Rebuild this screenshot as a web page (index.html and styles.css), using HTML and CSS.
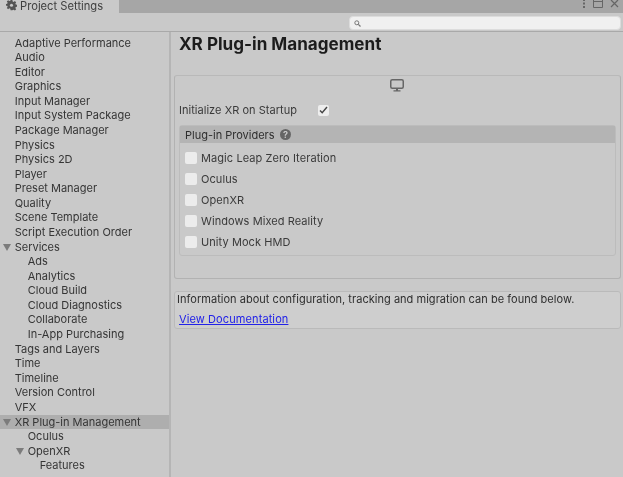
FILE: index.html
```html
<!DOCTYPE html>
<html lang="en">
<head>
<meta charset="utf-8">
<title>Project Settings</title>
<link rel="stylesheet" href="styles.css">
</head>
<body>
<div class="window">
  <header class="tabbar">
    <div class="tab">
      <svg class="gear" viewBox="0 0 12 12"><path d="M5 .5h2l.3 1.5 1.1.5 1.3-.9 1.4 1.4-.9 1.3.5 1.1 1.5.3v2l-1.5.3-.5 1.1.9 1.3-1.4 1.4-1.3-.9-1.1.5L7 11.5H5l-.3-1.5-1.1-.5-1.3.9-1.4-1.4.9-1.3-.5-1.1L0 6.800v-2l1.300-.3.5-1.100-.9-1.300L2.300 .7l1.300.9 1.100-.5z" fill="#555" transform="translate(0 -.4)"/><circle cx="6" cy="5.700" r="1.700" fill="#c8c8c8"/></svg>
      <span>Project Settings</span>
    </div>
    <div class="winctl">
      <svg width="4" height="9" viewBox="0 0 4 9"><path d="M1 0h2v2H1zM1 3.500h2v2H1zM1 7h2v2H1z" fill="#666"/></svg>
      <svg width="10" height="9" viewBox="0 0 10 9"><path d="M.5.500h9v8h-9zM.5 2.500h9" fill="none" stroke="#666"/></svg>
      <svg width="9" height="9" viewBox="0 0 9 9"><path d="M1 1l7 7M8 1L1 8" fill="none" stroke="#666" stroke-width="1.200"/></svg>
    </div>
  </header>
  <div class="toolbar">
    <div class="search">
      <svg width="7" height="7" viewBox="0 0 7 7"><circle cx="2.800" cy="2.800" r="2" fill="none" stroke="#777"/><path d="M4.300 4.300L6.500 6.500" stroke="#777" stroke-width="1.200"/></svg>
    </div>
  </div>
  <div class="main">
    <nav class="sidebar">
      <div class="item">Adaptive Performance</div>
      <div class="item">Audio</div>
      <div class="item">Editor</div>
      <div class="item">Graphics</div>
      <div class="item">Input Manager</div>
      <div class="item">Input System Package</div>
      <div class="item">Package Manager</div>
      <div class="item">Physics</div>
      <div class="item">Physics 2D</div>
      <div class="item">Player</div>
      <div class="item">Preset Manager</div>
      <div class="item">Quality</div>
      <div class="item">Scene Template</div>
      <div class="item">Script Execution Order</div>
      <div class="item open">Services</div>
      <div class="item l1">Ads</div>
      <div class="item l1">Analytics</div>
      <div class="item l1">Cloud Build</div>
      <div class="item l1">Cloud Diagnostics</div>
      <div class="item l1">Collaborate</div>
      <div class="item l1">In-App Purchasing</div>
      <div class="item">Tags and Layers</div>
      <div class="item">Time</div>
      <div class="item">Timeline</div>
      <div class="item">Version Control</div>
      <div class="item">VFX</div>
      <div class="item open selected">XR Plug-in Management</div>
      <div class="item l1">Oculus</div>
      <div class="item l1 open">OpenXR</div>
      <div class="item l2">Features</div>
    </nav>
    <main class="content">
      <h1 class="title">XR Plug-in Management</h1>
      <section class="panel">
        <div class="platform">
          <svg width="14" height="13" viewBox="0 0 14 13"><rect x=".75" y=".75" width="12.500" height="8.500" rx="1.500" fill="none" stroke="#666" stroke-width="1.500"/><path d="M6 9.500h2v2H6zM3.500 11.300h7v1.200h-7z" fill="#666"/></svg>
        </div>
        <div class="init">
          <span class="init-label">Initialize XR on Startup</span>
          <span class="check"><svg width="9" height="8" viewBox="0 0 9 8"><path d="M1 4.500L3.200 6.800 8 1" fill="none" stroke="#444" stroke-width="1.400"/></svg></span>
        </div>
        <div class="providers">
          <div class="prov-head">
            <span>Plug-in Providers</span>
            <svg width="11" height="11" viewBox="0 0 11 11"><circle cx="5.500" cy="5.500" r="5.500" fill="#666"/><text x="5.500" y="8.500" text-anchor="middle" class="qmark">?</text></svg>
          </div>
          <div class="prov-list">
            <label class="prov"><span class="box"></span>Magic Leap Zero Iteration</label>
            <label class="prov"><span class="box"></span>Oculus</label>
            <label class="prov"><span class="box"></span>OpenXR</label>
            <label class="prov"><span class="box"></span>Windows Mixed Reality</label>
            <label class="prov"><span class="box"></span>Unity Mock HMD</label>
          </div>
        </div>
      </section>
      <section class="info">
        <p class="info-text">Information about configuration, tracking and migration can be found below.</p>
        <a class="doc" href="#">View Documentation</a>
      </section>
    </main>
  </div>
</div>
</body>
</html>
```
FILE: styles.css
```css
* { box-sizing: border-box; }
html, body { margin: 0; padding: 0; }
body { width: 623px; height: 477px; overflow: hidden; background: #c9c9c9; font-family: Inter, "Liberation Sans", sans-serif; font-size: 11px; color: #303030; }
.window { display: flex; flex-direction: column; height: 477px; filter: blur(.4px); }
.tabbar { height: 13px; flex: none; display: flex; justify-content: space-between; background: #a6a6a6; }
.tab { width: 119px; background: #c9c9c9; display: flex; align-items: flex-start; gap: 3px; padding-left: 6px; font-size: 11.200px; line-height: 12px; color: #404040; }
.gear { width: 11px; height: 11px; margin-top: 0; }
.winctl { display: flex; gap: 7px; align-items: flex-start; padding-right: 4px; margin-top: 0; }
.winctl svg { margin-top: -1px; }
.toolbar { height: 19px; flex: none; display: flex; justify-content: flex-end; align-items: flex-start; padding: 3px 0 0; border-bottom: 1px solid #a9a9a9; }
.search { width: 272px; height: 14px; margin-right: 2px; background: #f0f0f0; border: 1px solid #dcdcdc; border-radius: 4px; display: flex; align-items: center; padding-left: 4px; }
.main { flex: 1; display: flex; min-height: 0; }
.sidebar { width: 171px; flex: none; padding-top: 3.500px; border-right: 2px solid #b5b5b5; }
.item { height: 14.586px; line-height: 14.586px; padding-left: 14.700px; color: #353535; white-space: nowrap; position: relative; }
.item.l1 { padding-left: 27.700px; }
.item.l2 { padding-left: 39.700px; }
.item.open::before { content: ""; position: absolute; left: 3px; top: 4px; border-left: 4px solid transparent; border-right: 4px solid transparent; border-top: 7px solid #7c7c7c; }
.item.l1.open::before { left: 16px; }
.selected { background: #aeaeae; }
.content { flex: 1; min-width: 0; padding: 0 2px 0 3px; }
.title { margin: 0; font-size: 17.100px; line-height: 22px; font-weight: 700; color: #1c1c1c; padding: 1px 0 0 5px; height: 43px; }
.panel { border: 1px solid #b2b2b2; border-radius: 3px; height: 204px; padding: 0 5px 0 4px; border-top-color: #b9b9b9; }
.platform { height: 16px; display: flex; justify-content: center; align-items: flex-end; margin: 0 -4px 0 -4px; }
.init { display: flex; align-items: center; height: 33px; padding-top: 3px; color: #3a3a3a; }
.init-label { width: 139px; letter-spacing: .03px; }
.check { width: 11px; height: 11px; background: #eeeeee; border-radius: 2px; display: flex; align-items: center; justify-content: center; }
.providers { border: 1px solid #bcbcbc; border-radius: 3px; height: 131px; margin-right: -1px; }
.prov-head { height: 17px; background: #b4b4b4; display: flex; align-items: center; gap: 5px; padding-left: 5px; color: #2e2e2e; }
.qmark { font-size: 9px; font-weight: 700; fill: #c8c8c8; }
.prov-list { display: flex; flex-direction: column; padding: 4px 0 0 5px; }
.prov { display: flex; align-items: center; gap: 4px; height: 21px; color: #3a3a3a; letter-spacing: .08px; }
.box { width: 12px; height: 12px; background: #ececec; border-radius: 2px; flex: none; }
.info { margin-top: 12px; border: 1px solid #bababa; border-radius: 3px; background: #cecece; height: 38px; padding: 0 0 0 2px; }
.info-text { margin: 0; line-height: 15px; color: #2e2e2e; letter-spacing: .03px; }
.doc { display: inline-block; margin: 6px 0 0 2px; color: #2222e8; line-height: 13px; text-decoration: underline; letter-spacing: .1px; }
```
